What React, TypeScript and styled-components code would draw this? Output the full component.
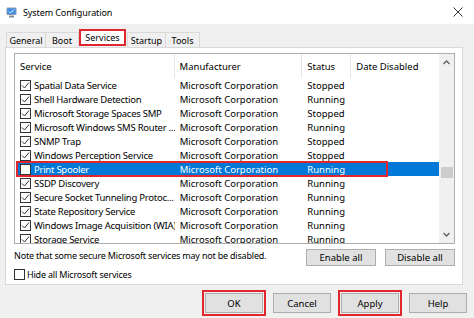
import styled, { createGlobalStyle, css } from 'styled-components';

const GlobalStyle = createGlobalStyle`
  html, body {
    margin: 0;
    padding: 0;
    overflow: hidden;
  }
  body {
    font-family: "Noto Sans", "Open Sans", sans-serif;
    color: #000;
  }
`;

const Window = styled.div`
  width: 474px;
  height: 318px;
  background: #f0f0f0;
  display: flex;
  flex-direction: column;
  overflow: hidden;
`;

const TitleBar = styled.div`
  height: 24px;
  background: #ffffff;
  display: flex;
  align-items: center;
  padding: 0 11px 0 6px;
  gap: 6px;
  flex-shrink: 0;
`;

const Title = styled.span`
  font-size: 9px;
  letter-spacing: -0.1px;
  flex: 1;
`;

const TabStrip = styled.div`
  display: flex;
  align-items: flex-end;
  padding: 7px 0 0 6px;
  height: 16px;
  flex-shrink: 0;
`;

const Tab = styled.div<{ $w: number; $active?: boolean }>`
  width: ${(p) => p.$w}px;
  box-sizing: border-box;
  height: 15px;
  text-align: center;
  font-size: 9px;
  line-height: 15px;
  background: #f0f0f0;
  border: 1px solid #d9d9d9;
  border-bottom: none;
  margin-right: -1px;
  ${(p) =>
    p.$active &&
    css`
      background: #ffffff;
      border: 2px solid #e0262e;
      height: 17px;
      line-height: 13px;
      margin: 0 1px;
      position: relative;
      top: -1px;
    `}
`;

const Panel = styled.div`
  margin: 0 11px 0 5px;
  height: 238px;
  box-sizing: border-box;
  background: #ffffff;
  border: 1px solid #d9d9d9;
  padding: 5px 7px 0 8px;
  flex-shrink: 0;
`;

const List = styled.div`
  height: 191px;
  box-sizing: border-box;
  border: 1px solid #adadad;
  display: flex;
`;

const ListBody = styled.div`
  flex: 1;
  display: flex;
  flex-direction: column;
  overflow: hidden;
`;

const HeaderRow = styled.div`
  height: 24px;
  flex-shrink: 0;
  display: flex;
  align-items: center;
  font-size: 9.5px;
`;

const HeaderCell = styled.div<{ $w: number; $pad: number }>`
  width: ${(p) => p.$w}px;
  padding-left: ${(p) => p.$pad}px;
  box-sizing: border-box;
  height: 100%;
  display: flex;
  align-items: center;
  border-right: 1px solid #e5e5e5;
  &:last-child {
    border-right: none;
  }
`;

const Row = styled.div<{ $selected?: boolean }>`
  height: 14px;
  flex-shrink: 0;
  margin-left: 2px;
  display: flex;
  align-items: center;
  font-size: 9.5px;
  white-space: nowrap;
  position: relative;
  background: ${(p) => (p.$selected ? '#0078d7' : 'transparent')};
  color: ${(p) => (p.$selected ? '#ffffff' : '#000000')};
`;

const Cell = styled.div<{ $w: number; $pad: number; $tight?: boolean }>`
  width: ${(p) => p.$w}px;
  padding-left: ${(p) => p.$pad}px;
  box-sizing: border-box;
  display: flex;
  align-items: center;
  gap: 3px;
  overflow: hidden;
  letter-spacing: ${(p) => (p.$tight ? '-0.25px' : '0')};
`;

const Box = styled.span`
  width: 11px;
  height: 11px;
  box-sizing: border-box;
  border: 1px solid #333333;
  background: #ffffff;
  flex-shrink: 0;
  display: inline-flex;
  align-items: center;
  justify-content: center;
`;

const RedFrame = styled.div`
  position: absolute;
  left: -1px;
  top: -1px;
  width: 372px;
  height: 16px;
  box-sizing: border-box;
  border: 2px solid #e0262e;
  pointer-events: none;
`;

const ScrollBar = styled.div`
  width: 15px;
  background: #f0f0f0;
  display: flex;
  flex-direction: column;
  align-items: center;
`;

const ScrollArrow = styled.div`
  height: 17px;
  width: 100%;
  display: flex;
  align-items: center;
  justify-content: center;
`;

const ScrollTrack = styled.div`
  flex: 1;
  width: 100%;
  display: flex;
  justify-content: center;
`;

const Thumb = styled.div`
  margin-top: 96px;
  width: 12px;
  height: 11px;
  background: #cdcdcd;
`;

const Footer = styled.div`
  display: flex;
  justify-content: space-between;
  margin-top: 5px;
`;

const FooterLeft = styled.div`
  display: flex;
  flex-direction: column;
  gap: 5px;
`;

const Note = styled.div`
  font-size: 9px;
  letter-spacing: -0.2px;
  line-height: 14px;
  white-space: nowrap;
`;

const CheckLine = styled.label`
  display: flex;
  align-items: center;
  gap: 2px;
  font-size: 9px;
  letter-spacing: -0.2px;
`;

const ButtonGroup = styled.div<{ $gap: number }>`
  display: flex;
  gap: ${(p) => p.$gap}px;
`;

const Button = styled.button<{ $w: number; $h: number; $marked?: boolean }>`
  width: ${(p) => p.$w}px;
  height: ${(p) => p.$h}px;
  background: #e1e1e1;
  border: 1px solid #adadad;
  font-family: inherit;
  font-size: 9.5px;
  color: #000;
  padding: 0;
  ${(p) =>
    p.$marked &&
    css`
      outline: 2px solid #e0262e;
      outline-offset: 1px;
    `}
`;

const DialogButtons = styled.div`
  display: flex;
  justify-content: flex-end;
  gap: 10px;
  padding: 8px 7px 0 0;
`;

const Check = () => (
  <svg width="9" height="9" viewBox="0 0 9 9">
    <path d="M1 4.5 L3.5 7 L8 1.5" fill="none" stroke="#333" strokeWidth="1" />
  </svg>
);

const AppIcon = () => (
  <svg width="11" height="11" viewBox="0 0 11 11">
    <rect x="0.5" y="0.5" width="10" height="7.5" rx="1" fill="#8a9bb0" />
    <rect x="1.5" y="1.5" width="8" height="5.5" fill="#3a8ee6" />
    <path d="M3 4.5 L4.5 6 L8 2.5" fill="none" stroke="#fff" strokeWidth="1" />
    <rect x="3" y="8.5" width="5" height="2" fill="#7f8c9c" />
  </svg>
);

const Chevron = ({ up }: { up?: boolean }) => (
  <svg width="7" height="5" viewBox="0 0 7 5">
    <path d={up ? 'M0.5 4 L3.5 1 L6.5 4' : 'M0.5 1 L3.5 4 L6.5 1'} fill="none" stroke="#606060" strokeWidth="1.3" />
  </svg>
);

const COLS = [
  { w: 158, pad: 3 },
  { w: 128, pad: 5 },
  { w: 49, pad: 5 },
  { w: 88, pad: 5 },
];

const tabs = [
  { label: 'General', w: 40 },
  { label: 'Boot', w: 34 },
  { label: 'Services', w: 47, active: true },
  { label: 'Startup', w: 39 },
  { label: 'Tools', w: 35 },
];

const services = [
  { name: 'Spatial Data Service', status: 'Stopped', on: true },
  { name: 'Shell Hardware Detection', status: 'Running', on: true },
  { name: 'Microsoft Storage Spaces SMP', status: 'Stopped', on: true },
  { name: 'Microsoft Windows SMS Router ...', status: 'Running', on: true },
  { name: 'SNMP Trap', status: 'Stopped', on: true },
  { name: 'Windows Perception Service', status: 'Stopped', on: true },
  { name: 'Print Spooler', status: 'Running', on: false, selected: true },
  { name: 'SSDP Discovery', status: 'Running', on: true },
  { name: 'Secure Socket Tunneling Protoc...', status: 'Running', on: true },
  { name: 'State Repository Service', status: 'Running', on: true },
  { name: 'Windows Image Acquisition (WIA)', status: 'Running', on: true },
  { name: 'Storage Service', status: 'Running', on: true },
];

export default function App() {
  return (
    <>
      <GlobalStyle />
      <Window>
        <TitleBar>
          <AppIcon />
          <Title>System Configuration</Title>
          <svg width="10" height="10" viewBox="0 0 10 10">
            <path d="M0.5 0.5 L9.5 9.5 M9.5 0.5 L0.5 9.5" stroke="#333" strokeWidth="1" />
          </svg>
        </TitleBar>
        <TabStrip>
          {tabs.map((t) => (
            <Tab key={t.label} $w={t.w} $active={t.active}>
              {t.label}
            </Tab>
          ))}
        </TabStrip>
        <Panel>
          <List>
            <ListBody>
              <HeaderRow>
                <HeaderCell $w={160} $pad={5}>Service</HeaderCell>
                <HeaderCell $w={128} $pad={5}>Manufacturer</HeaderCell>
                <HeaderCell $w={49} $pad={5}>Status</HeaderCell>
                <HeaderCell $w={88} $pad={5}>Date Disabled</HeaderCell>
              </HeaderRow>
              {services.map((s) => (
                <Row key={s.name} $selected={s.selected}>
                  <Cell $w={COLS[0].w} $pad={COLS[0].pad} $tight>
                    <Box>{s.on && <Check />}</Box>
                    {s.name}
                  </Cell>
                  <Cell $w={COLS[1].w} $pad={COLS[1].pad}>Microsoft Corporation</Cell>
                  <Cell $w={COLS[2].w} $pad={COLS[2].pad}>{s.status}</Cell>
                  <Cell $w={COLS[3].w} $pad={COLS[3].pad} />
                  {s.selected && <RedFrame />}
                </Row>
              ))}
            </ListBody>
            <ScrollBar>
              <ScrollArrow>
                <Chevron up />
              </ScrollArrow>
              <ScrollTrack>
                <Thumb />
              </ScrollTrack>
              <ScrollArrow>
                <Chevron />
              </ScrollArrow>
            </ScrollBar>
          </List>
          <Footer>
            <FooterLeft>
              <Note>Note that some secure Microsoft services may not be disabled.</Note>
              <CheckLine>
                <Box />
                Hide all Microsoft services
              </CheckLine>
            </FooterLeft>
            <ButtonGroup $gap={9}>
              <Button $w={70} $h={17}>Enable all</Button>
              <Button $w={70} $h={17}>Disable all</Button>
            </ButtonGroup>
          </Footer>
        </Panel>
        <DialogButtons>
          <Button $w={58} $h={20} $marked>OK</Button>
          <Button $w={58} $h={20}>Cancel</Button>
          <Button $w={58} $h={20} $marked>Apply</Button>
          <Button $w={58} $h={20}>Help</Button>
        </DialogButtons>
      </Window>
    </>
  );
}
